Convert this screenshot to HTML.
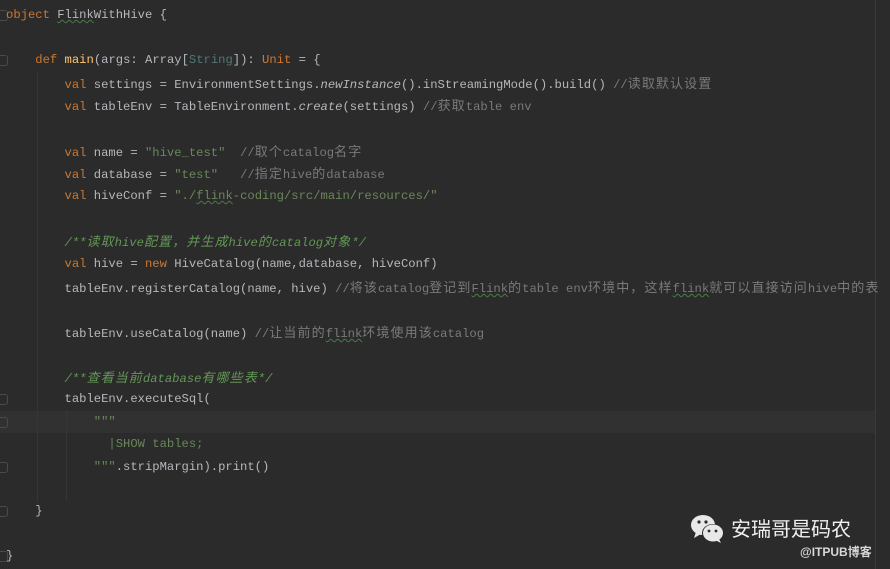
<!DOCTYPE html>
<html><head><meta charset="utf-8"><style>
body{margin:0;width:890px;height:569px;background:#2b2b2b;overflow:hidden;position:relative;font-family:"Liberation Mono","Noto Sans CJK SC",monospace;font-size:12.2px;color:#b4b8bc}
.l{position:absolute;left:6px;white-space:pre;height:22px;line-height:22px}
.k{color:#cc7832}.s{color:#6a8759}.g{color:#7a7a7a}.d{color:#629755;font-style:italic}.f{color:#ffc66d}.t{color:#507874}
.c{font-family:"Noto Sans CJK SC",sans-serif;font-size:13px;letter-spacing:1.1px}
.u{text-decoration:underline wavy #4a7a4a;text-decoration-thickness:1px}
.hl{position:absolute;left:0;top:411px;width:875px;height:22px;background:#313131}
.guide{position:absolute;width:1px;background:#363636}
.edge{position:absolute;left:875px;top:0;width:1px;height:569px;background:#3a3a3a}
.gut{position:absolute;left:0;width:7px;height:9px;border:1px solid #4a4a4a;border-left:none;border-radius:0 3px 3px 0}
</style></head><body>
<div class="hl"></div>
<div class="edge"></div>
<div class="guide" style="left:37px;top:72px;height:430px"></div>
<div class="guide" style="left:66px;top:410px;height:90px"></div>
<div class="gut" style="top:10px"></div>
<div class="gut" style="top:55px"></div>
<div class="gut" style="top:394px"></div>
<div class="gut" style="top:417px"></div>
<div class="gut" style="top:462px"></div>
<div class="gut" style="top:506px"></div>
<div class="gut" style="top:551px"></div>
<div class="l" style="top:4px"><span class="k">object</span> <span class="u">Flink</span>WithHive {</div>
<div class="l" style="top:49px">    <span class="k">def</span> <span class="f">main</span>(args: Array[<span class="t">String</span>]): <span class="k">Unit</span> = {</div>
<div class="l" style="top:72px">        <span class="k">val</span> settings = EnvironmentSettings.<i>newInstance</i>().inStreamingMode().build() <span class="g">//<span class="c">读取默认设置</span></span></div>
<div class="l" style="top:94px">        <span class="k">val</span> tableEnv = TableEnvironment.<i>create</i>(settings) <span class="g">//<span class="c">获取</span>table env</span></div>
<div class="l" style="top:140px">        <span class="k">val</span> name = <span class="s">"hive_test"</span>  <span class="g">//<span class="c">取个</span>catalog<span class="c">名字</span></span></div>
<div class="l" style="top:162px">        <span class="k">val</span> database = <span class="s">"test"</span>   <span class="g">//<span class="c">指定</span>hive<span class="c">的</span>database</span></div>
<div class="l" style="top:185px">        <span class="k">val</span> hiveConf = <span class="s">"./<span class="u">flink</span>-coding/src/main/resources/"</span></div>
<div class="l" style="top:230px">        <span class="d">/**<span class="c">读取</span>hive<span class="c">配置，并生成</span>hive<span class="c">的</span>catalog<span class="c">对象</span>*/</span></div>
<div class="l" style="top:253px">        <span class="k">val</span> hive = <span class="k">new</span> HiveCatalog(name,database, hiveConf)</div>
<div class="l" style="top:276px">        tableEnv.registerCatalog(name, hive) <span class="g">//<span class="c">将该</span>catalog<span class="c">登记到</span><span class="u">Flink</span><span class="c">的</span>table env<span class="c">环境中，这样</span><span class="u">flink</span><span class="c">就可以直接访问</span>hive<span class="c">中的表</span></span></div>
<div class="l" style="top:321px">        tableEnv.useCatalog(name) <span class="g">//<span class="c">让当前的</span><span class="u">flink</span><span class="c">环境使用该</span>catalog</span></div>
<div class="l" style="top:366px">        <span class="d">/**<span class="c">查看当前</span>database<span class="c">有哪些表</span>*/</span></div>
<div class="l" style="top:388px">        tableEnv.executeSql(</div>
<div class="l" style="top:411px">            <span class="s">"""</span></div>
<div class="l" style="top:433px">              <span class="s">|SHOW tables;</span></div>
<div class="l" style="top:456px">            <span class="s">"""</span>.stripMargin).print()</div>
<div class="l" style="top:500px">    }</div>
<div class="l" style="top:545px">}</div>
<svg style="position:absolute;left:690px;top:513px" width="36" height="32" viewBox="0 0 36 32">
<ellipse cx="13" cy="12" rx="12" ry="10" fill="#e8e8e8"/><path d="M6 19 L4 25 L11 21Z" fill="#e8e8e8"/>
<ellipse cx="23" cy="20" rx="11" ry="9" fill="#2b2b2b"/>
<ellipse cx="23" cy="20" rx="10" ry="8.5" fill="#e8e8e8"/><path d="M29 26 L31 30 L25 27Z" fill="#e8e8e8"/>
<circle cx="9" cy="9" r="1.6" fill="#2b2b2b"/><circle cx="16" cy="9" r="1.6" fill="#2b2b2b"/>
<circle cx="19" cy="18" r="1.4" fill="#2b2b2b"/><circle cx="26" cy="18" r="1.4" fill="#2b2b2b"/>
</svg>
<div style="position:absolute;left:731px;top:515px;font-family:'Noto Sans CJK SC',sans-serif;font-size:20px;color:#f0f0f0;line-height:26px">安瑞哥是码农</div>
<div style="position:absolute;left:800px;top:543px;font-family:'Liberation Sans','Noto Sans CJK SC',sans-serif;font-size:12px;font-weight:bold;color:#d8d8d8;line-height:18px">@ITPUB博客</div>
</body></html>
